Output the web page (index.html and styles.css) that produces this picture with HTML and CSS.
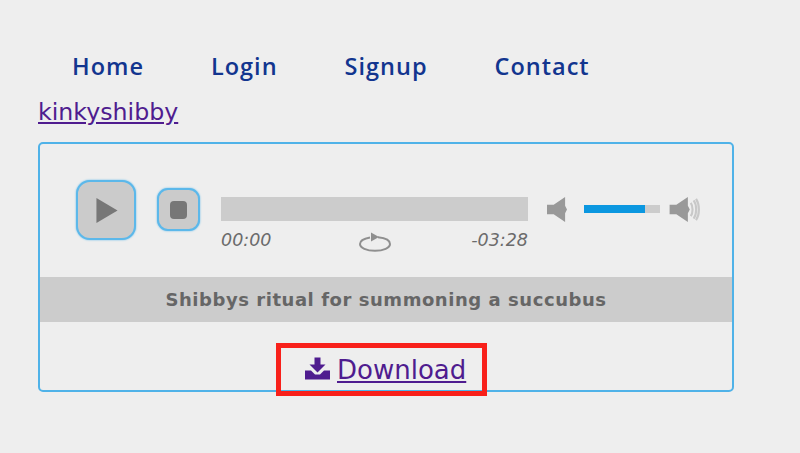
FILE: index.html
```html
<!DOCTYPE html>
<html lang="en">
<head>
<meta charset="utf-8">
<title>Shibbys ritual</title>
<link rel="stylesheet" href="styles.css">
</head>
<body>
<nav class="nav">
  <a href="#">Home</a>
  <a href="#">Login</a>
  <a href="#">Signup</a>
  <a href="#">Contact</a>
</nav>
<a class="user" href="#">kinkyshibby</a>
<section class="card">
  <div class="player">
    <button class="btn btn-play" aria-label="Play"><svg width="22" height="25" viewBox="0 0 22 26"><path d="M0 0L22 13L0 26Z" fill="#777"/></svg></button>
    <button class="btn btn-stop" aria-label="Stop"><span class="stop-icon"></span></button>
    <div class="track">
      <div class="seek"></div>
      <div class="times">
        <span>00:00</span>
        <svg class="repeat" width="32" height="20" viewBox="0 0 32 20"><path d="M11 5.500C5 6.500 1 8.700 1 12C1 15.800 7.500 18.800 16 18.800C24.500 18.800 31 15.800 31 12C31 8.500 26 6 19 5.300" fill="none" stroke="#8f8f8f" stroke-width="2"/><path d="M12 0.500L20 5L12 9.500Z" fill="#8f8f8f"/></svg>
        <span>-03:28</span>
      </div>
    </div>
    <svg class="vol-icon vol-low" width="20" height="25" viewBox="0 0 21 26"><path d="M0 8H7L19 0V26L7 18H0Z M19 9L21 13L19 17Z" fill="#999"/></svg>
    <div class="vol-bar"><div class="vol-fill"></div></div>
    <svg class="vol-icon" width="31" height="25" viewBox="0 0 31 26"><path d="M0 8H7L19 0V26L7 18H0Z M19 9L21 13L19 17Z" fill="#999"/><path d="M22 6C24.500 9.500 24.500 16.500 22 20M25 3.500C28.500 8 28.500 18 25 22.500M27.500 2C31.500 8 31.500 18 27.500 24" fill="none" stroke="#c8c8c8" stroke-width="2.200"/></svg>
  </div>
  <h1 class="title">Shibbys ritual for summoning a succubus</h1>
  <div class="download-row">
    <div class="highlight">
      <svg width="25" height="23" viewBox="0 0 25 22"><path d="M9.500 0H15.500V7H20.500L12.500 15L4.500 7H9.500Z M0 13H6L10 17H15L19 13H25V22H0Z" fill="#4f1c8f"/></svg>
      <a class="download" href="#">Download</a>
    </div>
  </div>
</section>
</body>
</html>
```
FILE: styles.css
```css
* { box-sizing: border-box; }
html, body { margin: 0; height: 453px; overflow: hidden; }
body {
  background: #eeeeee;
  padding: 50px 0 0 38px;
  font-family: "DejaVu Sans", Verdana, sans-serif;
}
.nav {
  display: flex;
  gap: 67px;
  padding-left: 34px;
  height: 32px;
  align-items: center;
}
.nav a {
  color: #12358f;
  font-size: 23.5px;
  font-weight: 600;
  letter-spacing: 1px;
  text-decoration: none;
  font-family: "Open Sans", sans-serif;
}
.user {
  display: block;
  width: max-content;
  height: 28px;
  margin-top: 16px;
  color: #4f1c8f;
  font-size: 23.7px;
  line-height: 28px;
}
.card {
  width: 696px;
  height: 250px;
  margin-top: 16px;
  border: 2px solid #4fb2e8;
  border-radius: 5px;
}
.player {
  display: flex;
  align-items: flex-start;
  height: 133px;
  padding: 36px 0 0 36px;
}
.btn {
  display: flex;
  align-items: center;
  justify-content: center;
  padding: 0;
  background: #cbcbcb;
  border: 2.5px solid #5cb8ea;
  box-shadow: 0 0 2px #5cb8ea;
}
.btn-play {
  width: 60px;
  height: 60px;
  border-radius: 14px;
  padding-left: 2px;
}
.btn-stop {
  width: 43px;
  height: 43px;
  margin: 8px 21px 0 21px;
  border-radius: 11px;
}
.stop-icon {
  width: 17px;
  height: 18px;
  background: #777;
  border-radius: 4px;
}
.track {
  width: 307px;
  margin-top: 17px;
}
.seek {
  height: 24px;
  background: #cccccc;
}
.times {
  display: flex;
  justify-content: space-between;
  align-items: center;
  height: 38px;
  color: #6b6b6b;
  font-size: 17.5px;
  font-style: italic;
}
.repeat { margin-left: 7px; margin-top: 3px; }
.vol-icon { margin-top: 17px; flex: none; }
.vol-low { margin-left: 19px; }
.vol-bar {
  width: 76px;
  height: 8px;
  margin: 25px 9px 0 17px;
  background: #cccccc;
}
.vol-fill {
  width: 61px;
  height: 8px;
  background: #0b97e0;
}
.title {
  margin: 0;
  height: 45px;
  background: #cccccc;
  color: #666666;
  font-size: 18px;
  font-weight: 700;
  line-height: 45px;
  text-align: center;
  letter-spacing: 0.55px;
}
.download-row {
  display: flex;
  justify-content: center;
  padding-top: 21px;
  height: 68px;
}
.highlight {
  display: flex;
  align-items: center;
  gap: 7px;
  width: 211px;
  height: 53px;
  flex: none;
  padding-left: 24px;
  border: 5px solid #f8201a;
  margin-left: -9px;
}
.highlight svg { margin-top: -3px; }
.download {
  color: #4f1c8f;
  font-size: 26px;
}
```
